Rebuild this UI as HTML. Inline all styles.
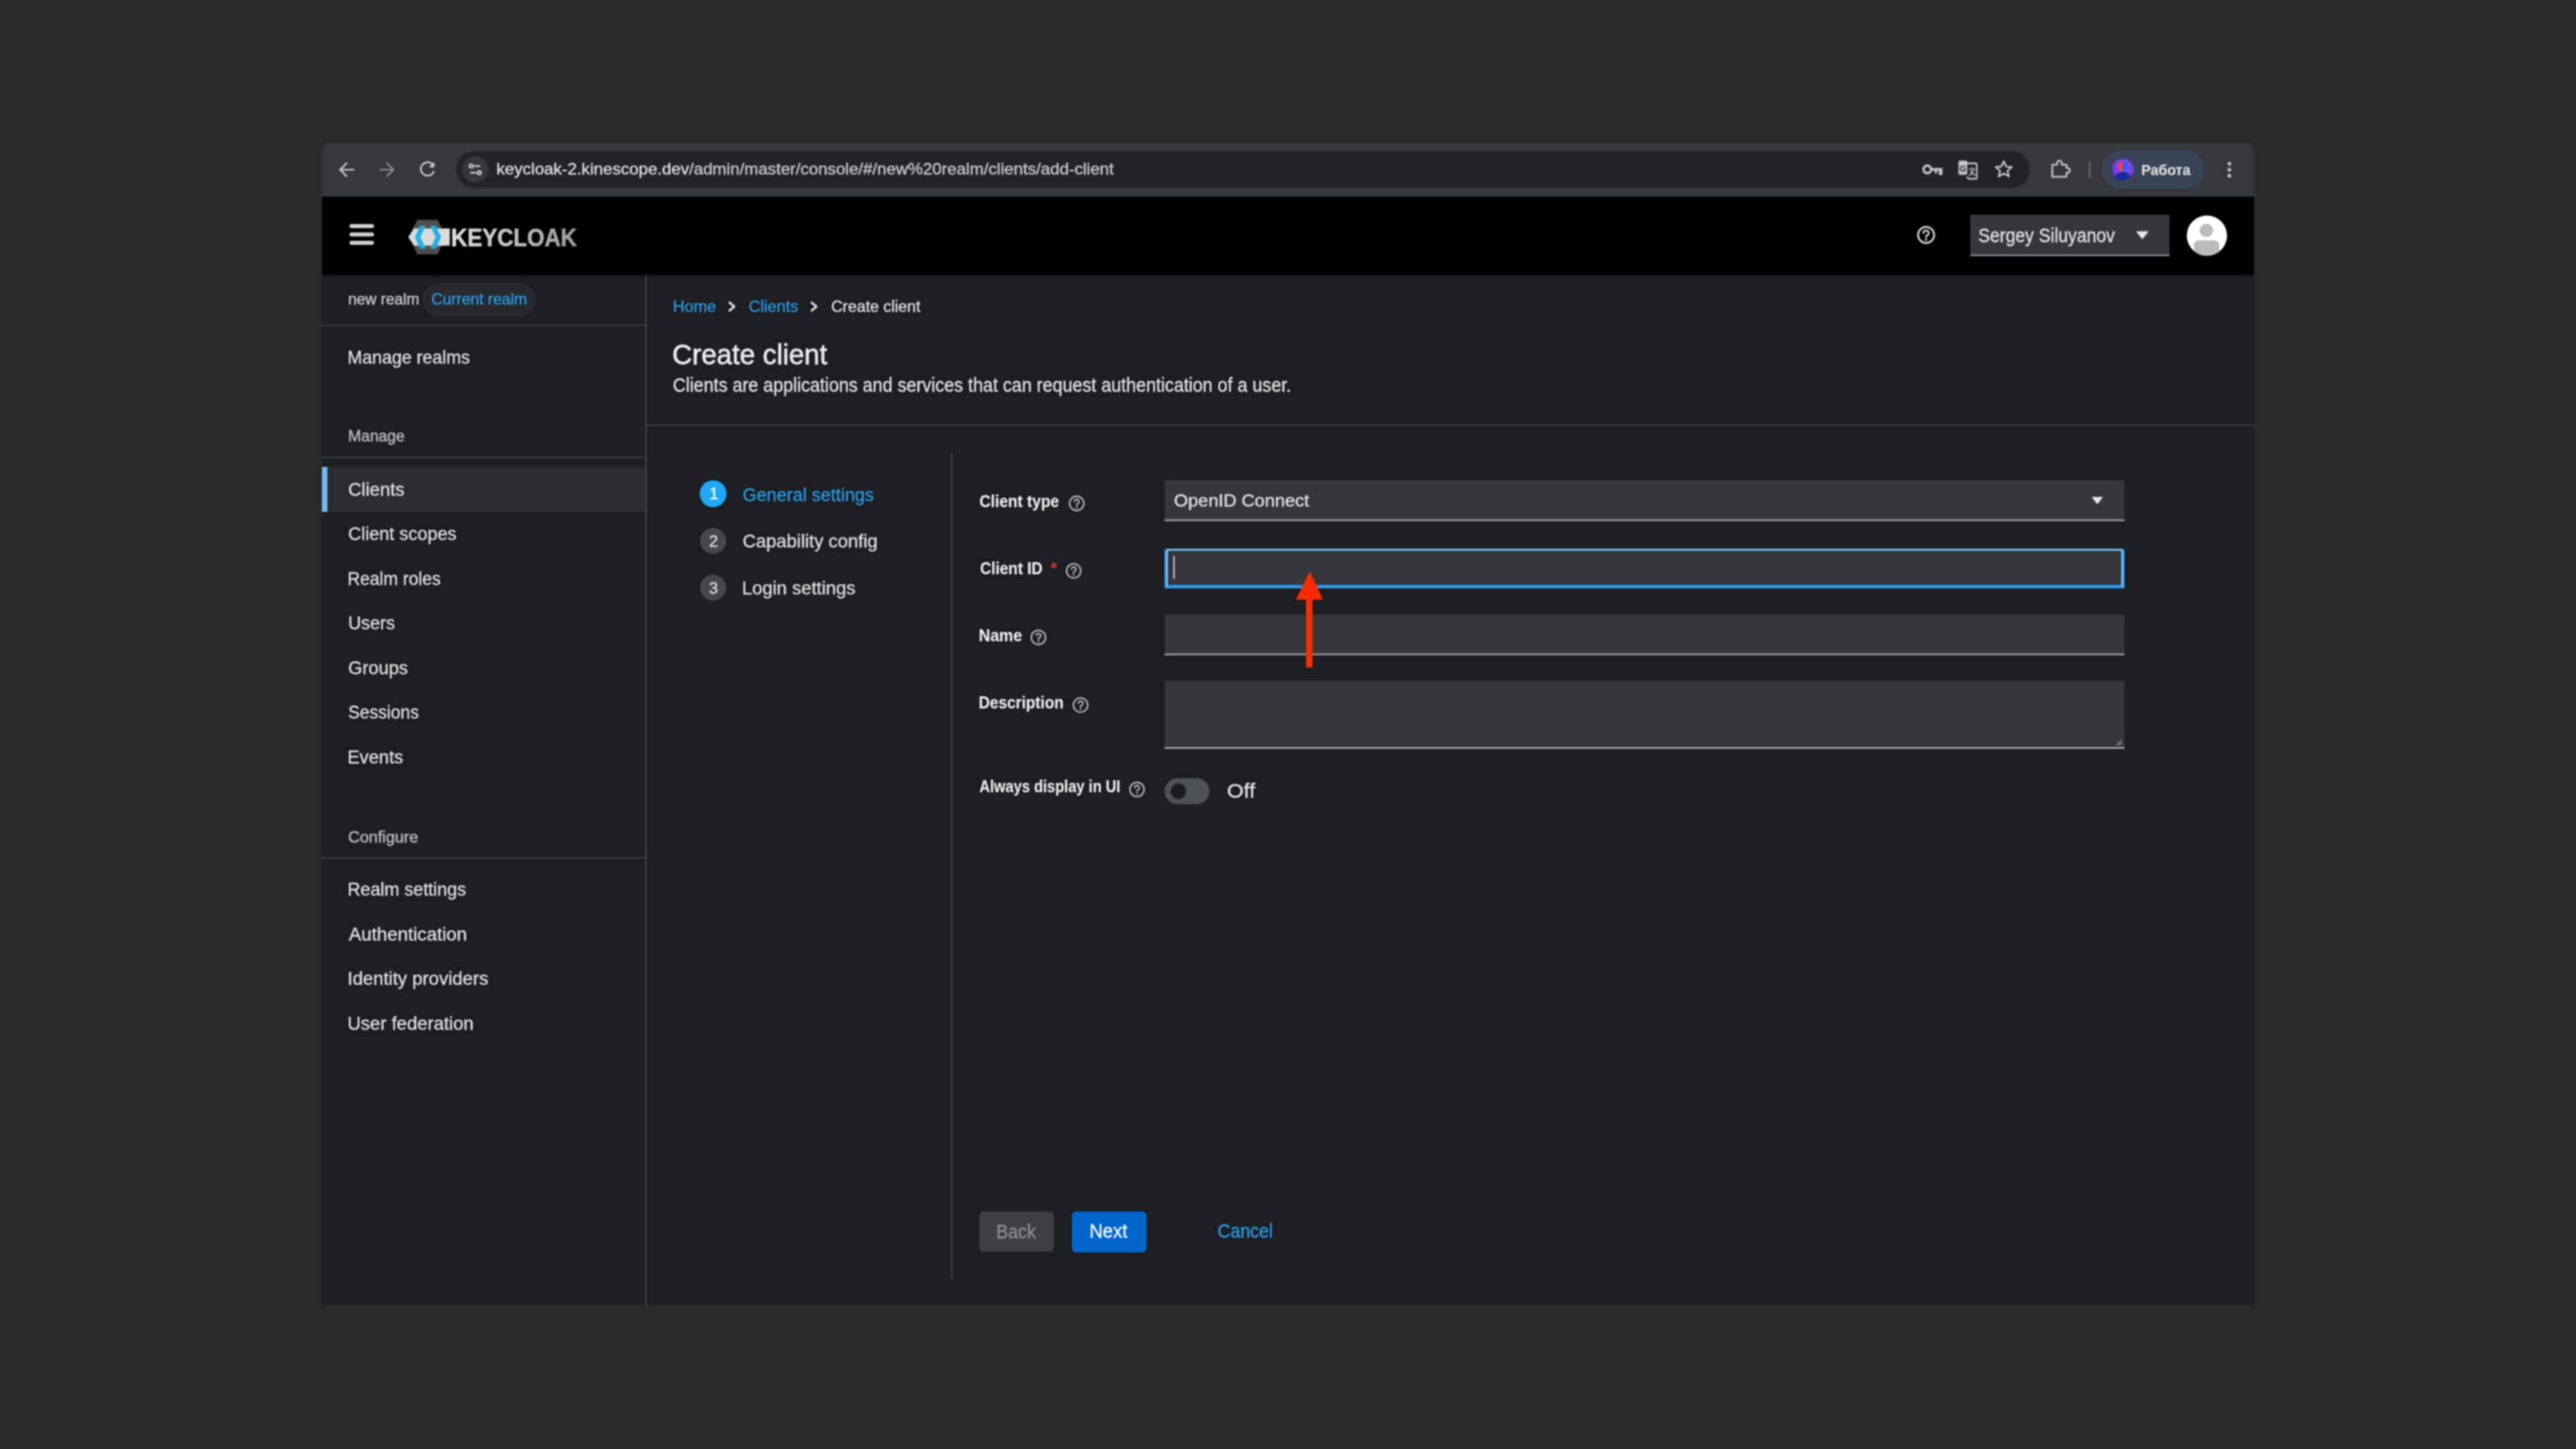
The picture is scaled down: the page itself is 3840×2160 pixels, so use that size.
<!DOCTYPE html>
<html><head><meta charset="utf-8">
<style>
html,body{margin:0;padding:0;width:3840px;height:2160px;overflow:hidden;background:#2a2a2a;}
*{box-sizing:border-box;}
body{font-family:"Liberation Sans",sans-serif;position:relative;}
.a{position:absolute;}
.t{position:absolute;line-height:1;white-space:nowrap;transform-origin:0 0;-webkit-text-stroke:0.35px currentColor;}
svg{position:absolute;overflow:visible;}
</style></head>
<body><div id="wrap" style="position:absolute;left:0;top:0;width:3840px;height:2160px;filter:blur(0.9px);">

<div class="a" style="left:480.00px;top:213.00px;width:2880.00px;height:1732.00px;background:#1d1e22;border-radius:10px 10px 0 0;"></div>
<div class="a" style="left:480.00px;top:213.00px;width:2880.00px;height:80.00px;background:#36383c;border-radius:10px 10px 0 0;"></div>
<div class="a" style="left:680.00px;top:225.00px;width:2346.00px;height:55.00px;background:#222428;border-radius:28px;"></div>
<div class="a" style="left:689.00px;top:233.00px;width:39.00px;height:39.00px;background:#35373b;border-radius:50%;"></div>
<svg style="left:0;top:0" width="3840" height="300" viewBox="0 0 3840 300">
 <g stroke="#c4c6ca" stroke-width="2.6" fill="none" stroke-linecap="round" stroke-linejoin="round">
  <path d="M507 253 H527 M516.5 243.5 L507 253 L516.5 262.5"/>
 </g>
 <g stroke="#85878b" stroke-width="2.6" fill="none" stroke-linecap="round" stroke-linejoin="round">
  <path d="M566.5 253 H586.5 M577 243.5 L586.5 253 L577 262.5"/>
 </g>
 <path d="M645.5 246 A10 10 0 1 0 646.5 256" stroke="#c4c6ca" stroke-width="2.6" fill="none" stroke-linecap="round"/>
 <path d="M647.5 241 V249.5 H639 Z" fill="#c4c6ca"/>
 <g stroke="#d0d2d5" stroke-width="2.4" fill="none" stroke-linecap="round">
  <circle cx="702.5" cy="247.5" r="2.6"/><path d="M708 247.5 H715"/>
  <circle cx="714.5" cy="257.5" r="2.6"/><path d="M702 257.5 H709"/>
 </g>
 <circle cx="2873" cy="252.5" r="5.6" fill="none" stroke="#c4c6ca" stroke-width="3.6"/>
 <path d="M2878.5 250.6 H2895.5 V261 H2890.3 V254.4 H2887.6 V258.5 H2884.2 V254.4 H2878.5 Z" fill="#c4c6ca"/>
 <rect x="2919.5" y="239.5" width="13" height="21" rx="1.5" fill="#c4c6ca"/>
 <text x="2921" y="255.5" font-family="Liberation Sans" font-size="12.5" font-weight="bold" fill="#26282c">G</text>
 <path d="M2932 243.5 H2945.5 A1.2 1.2 0 0 1 2946.7 244.7 V265.3 A1.2 1.2 0 0 1 2945.5 266.5 H2934.5 L2932 263.5" fill="none" stroke="#c4c6ca" stroke-width="2.4" stroke-linejoin="round"/>
 <path d="M2935.5 252 H2943.5 M2939.5 250 V252 M2942.5 252 Q2940 259 2935.5 261.5 M2937.5 255 Q2940 259.5 2944 261" fill="none" stroke="#c4c6ca" stroke-width="1.6" stroke-linecap="round"/>
 <path d="M2987 240.5 L2990.6 248.3 L2999 249 L2992.6 254.6 L2994.6 263 L2987 258.6 L2979.4 263 L2981.4 254.6 L2975 249 L2983.4 248.3 Z" fill="none" stroke="#c4c6ca" stroke-width="2.5" stroke-linejoin="round"/>
 <path d="M3059.3 245.5 H3066.5 V243 A3.5 3.5 0 0 1 3073.5 243 V245.5 H3080.5 V250.5 H3082 A3.5 3.5 0 0 1 3082 257.5 H3080.5 V263.5 H3059.3 Z" fill="none" stroke="#c4c6ca" stroke-width="2.6" stroke-linejoin="round"/>
 <rect x="3113.5" y="240" width="3" height="26" rx="1.5" fill="#5b5e63"/>
 <circle cx="3323.3" cy="244" r="2.7" fill="#c4c6ca"/>
 <circle cx="3323.3" cy="253" r="2.7" fill="#c4c6ca"/>
 <circle cx="3323.3" cy="262" r="2.7" fill="#c4c6ca"/>
</svg>
<div class="a" style="left:3133.00px;top:224.00px;width:153.00px;height:57.00px;background:#3a4457;border-radius:29px;"></div>
<svg style="left:0;top:0" width="3840" height="300" viewBox="0 0 3840 300"><defs><clipPath id="pav"><circle cx="3164.6" cy="252.8" r="16.2"/></clipPath><radialGradient id="pbg" cx="0.55" cy="0.4" r="0.7"><stop offset="0" stop-color="#8a5cff"/><stop offset="1" stop-color="#5a2fd8"/></radialGradient></defs><circle cx="3164.6" cy="252.8" r="16.2" fill="url(#pbg)"/><g clip-path="url(#pav)"><path d="M3150 272 Q3152 259 3160 257 L3164.5 256 L3169 257 Q3177 259 3179 272 Z" fill="#1a2a9a"/><ellipse cx="3162" cy="248" rx="4.8" ry="7.5" fill="#ff3b4a"/><ellipse cx="3167.5" cy="248.5" rx="3.6" ry="7" fill="#2c5cff"/></g></svg>
<div class="t" id="url" style="left:740.40px;top:240.18px;font-size:24.50px;color:#e6e6e6;font-weight:normal;-webkit-text-stroke:0.35px #e6e6e6;transform:scaleX(1.0239);"><span>keycloak-2.kinescope.dev</span><span style="color:#c2c4c8">/admin/master/console/#/new%20realm/clients/add-client</span></div>
<div class="t" id="rabota" style="left:3191.52px;top:241.66px;font-size:22.75px;color:#e4e6ea;font-weight:bold;-webkit-text-stroke:0.1px #e4e6ea;transform:scaleX(0.9305);">Работа</div>
<div class="a" style="left:480.00px;top:293.00px;width:2880.00px;height:115.00px;background:#000;"></div>
<svg style="left:0;top:0" width="3840" height="420" viewBox="0 0 3840 420">
 <g fill="#cfcfcf">
  <rect x="521" y="334" width="36.5" height="6" rx="3"/>
  <rect x="521" y="346.5" width="36.5" height="6" rx="3"/>
  <rect x="521" y="359" width="36.5" height="6" rx="3"/>
 </g>
 <path d="M622 327.4 H652.5 L664 352 L652.5 379.2 H622 L610 352 Z" fill="#4d4d4d"/>
 <path d="M608.6 353.4 L617 340.4 H670.5 V366.3 H617 Z" fill="#d9d9d9"/>
 <path d="M626.5 336.5 L618.5 353.5 L626.5 370.8 H634.5 L626.5 353.5 L634.5 336.5 Z" fill="#1eb1e6"/>
 <path d="M641.5 336.5 L649.5 353.5 L641.5 370.8 H649.5 L657.5 353.5 L649.5 336.5 Z" fill="#1eb1e6"/>
 <circle cx="2871.2" cy="350.2" r="12" fill="none" stroke="#c8c8c8" stroke-width="3"/>
 <path d="M2867.4 347.5 A3.8 3.8 0 1 1 2872.4 351 Q2871.2 351.6 2871.2 353.2 V353.8" fill="none" stroke="#c8c8c8" stroke-width="2.8" stroke-linecap="round"/>
 <circle cx="2871.2" cy="357.2" r="1.7" fill="#c8c8c8"/>
 <defs><clipPath id="av"><circle cx="3289.8" cy="351.2" r="30"/></clipPath></defs>
 <circle cx="3289.8" cy="351.2" r="30" fill="#fff"/>
 <g clip-path="url(#av)" fill="#bcbcbc">
  <circle cx="3289" cy="343.5" r="10"/>
  <path d="M3270.4 382 V365 Q3270.4 358.2 3279 358.2 H3299.5 Q3308.1 358.2 3308.1 365 V382 Z"/>
 </g>
</svg>
<svg style="left:0;top:0" width="3840" height="420" viewBox="0 0 3840 420"><defs><linearGradient id="kcg" x1="672" x2="861" y1="0" y2="0" gradientUnits="userSpaceOnUse"><stop offset="0" stop-color="#e0e0e0"/><stop offset="1" stop-color="#9c9c9c"/></linearGradient></defs><text x="672.5" y="366.8" font-family="Liberation Sans" font-weight="bold" font-size="37.2" textLength="187.5" lengthAdjust="spacingAndGlyphs" fill="url(#kcg)" stroke="url(#kcg)" stroke-width="0.7">KEYCLOAK</text></svg>
<div class="a" style="left:2937.00px;top:320.00px;width:297.00px;height:61.60px;background:#36373b;border-bottom:3.5px solid #777a7e;"></div>
<svg style="left:0;top:0" width="3840" height="420" viewBox="0 0 3840 420"><path d="M3185.5 345.5 H3201.5 L3193.5 355.5 Z" fill="#e8e8e8" stroke="#e8e8e8" stroke-width="1.5" stroke-linejoin="round"/></svg>
<div class="t" id="user" style="left:2949.00px;top:336.21px;font-size:29.40px;color:#e6e6e6;font-weight:normal;-webkit-text-stroke:0.35px #e6e6e6;transform:scaleX(0.8904);">Sergey Siluyanov</div>
<div class="a" style="left:962.00px;top:408.00px;width:2.00px;height:1537.00px;background:#46484c;"></div>
<div class="a" style="left:480.00px;top:408.00px;width:2880.00px;height:5.00px;background:linear-gradient(#000c,#0000);"></div>
<div class="t" id="newrealm" style="left:519.40px;top:434.30px;font-size:24.00px;color:#c2c4c6;font-weight:normal;-webkit-text-stroke:0.6px #c2c4c6;transform:scaleX(0.9583);">new realm</div>
<div class="a" style="left:629.00px;top:422.40px;width:169.00px;height:49.60px;background:#27292d;border-radius:25px;"></div>
<div class="t" id="currealm" style="left:643.34px;top:434.30px;font-size:24.00px;color:#2a9fe8;font-weight:normal;-webkit-text-stroke:0.35px #2a9fe8;transform:scaleX(0.9724);">Current realm</div>
<div class="a" style="left:480.00px;top:484.00px;width:482.00px;height:2.00px;background:#3f4145;"></div>
<div class="t" id="mrealms" style="left:518.00px;top:518.62px;font-size:27.50px;color:#e2e2e2;font-weight:normal;-webkit-text-stroke:0.35px #e2e2e2;transform:scaleX(0.9625);">Manage realms</div>
<div class="t" id="manage" style="left:519.24px;top:638.32px;font-size:24.80px;color:#b8bbbe;font-weight:normal;-webkit-text-stroke:0.6px #b8bbbe;transform:scaleX(0.9399);">Manage</div>
<div class="a" style="left:480.00px;top:681.00px;width:482.00px;height:2.00px;background:#3f4145;"></div>
<div class="a" style="left:480.00px;top:696.00px;width:482.00px;height:67.00px;background:#2a2c30;"></div>
<div class="a" style="left:480.00px;top:696.00px;width:8.00px;height:67.00px;background:#73bcf7;"></div>
<div class="t" id="nav0" style="left:519.00px;top:715.62px;font-size:27.50px;color:#e2e2e2;font-weight:normal;-webkit-text-stroke:0.35px #e2e2e2;transform:scaleX(1.0002);">Clients</div>
<div class="t" id="nav1" style="left:519.00px;top:782.12px;font-size:27.50px;color:#e2e2e2;font-weight:normal;-webkit-text-stroke:0.35px #e2e2e2;transform:scaleX(0.9788);">Client scopes</div>
<div class="t" id="nav2" style="left:518.00px;top:848.62px;font-size:27.50px;color:#e2e2e2;font-weight:normal;-webkit-text-stroke:0.35px #e2e2e2;transform:scaleX(0.9479);">Realm roles</div>
<div class="t" id="nav3" style="left:518.80px;top:915.12px;font-size:27.50px;color:#e2e2e2;font-weight:normal;-webkit-text-stroke:0.35px #e2e2e2;transform:scaleX(0.9712);">Users</div>
<div class="t" id="nav4" style="left:519.00px;top:981.62px;font-size:27.50px;color:#e2e2e2;font-weight:normal;-webkit-text-stroke:0.35px #e2e2e2;transform:scaleX(0.9892);">Groups</div>
<div class="t" id="nav5" style="left:519.00px;top:1048.12px;font-size:27.50px;color:#e2e2e2;font-weight:normal;-webkit-text-stroke:0.35px #e2e2e2;transform:scaleX(0.9455);">Sessions</div>
<div class="t" id="nav6" style="left:518.00px;top:1114.62px;font-size:27.50px;color:#e2e2e2;font-weight:normal;-webkit-text-stroke:0.35px #e2e2e2;transform:scaleX(0.988);">Events</div>
<div class="t" id="configure" style="left:519.00px;top:1236.32px;font-size:24.80px;color:#b8bbbe;font-weight:normal;-webkit-text-stroke:0.6px #b8bbbe;transform:scaleX(0.9704);">Configure</div>
<div class="a" style="left:480.00px;top:1278.00px;width:482.00px;height:2.00px;background:#3f4145;"></div>
<div class="t" id="nav20" style="left:518.00px;top:1312.03px;font-size:27.50px;color:#e2e2e2;font-weight:normal;-webkit-text-stroke:0.35px #e2e2e2;transform:scaleX(0.9722);">Realm settings</div>
<div class="t" id="nav21" style="left:520.00px;top:1378.53px;font-size:27.50px;color:#e2e2e2;font-weight:normal;-webkit-text-stroke:0.35px #e2e2e2;transform:scaleX(1.0116);">Authentication</div>
<div class="t" id="nav22" style="left:518.00px;top:1445.03px;font-size:27.50px;color:#e2e2e2;font-weight:normal;-webkit-text-stroke:0.35px #e2e2e2;transform:scaleX(1.0024);">Identity providers</div>
<div class="t" id="nav23" style="left:518.00px;top:1511.53px;font-size:27.50px;color:#e2e2e2;font-weight:normal;-webkit-text-stroke:0.35px #e2e2e2;">User federation</div>
<div class="t" id="bc0" style="left:1002.92px;top:444.59px;font-size:24.60px;color:#2a9fe8;font-weight:normal;-webkit-text-stroke:0.35px #2a9fe8;transform:scaleX(0.9842);">Home</div>
<div class="t" id="bc1" style="left:1116.00px;top:444.59px;font-size:24.60px;color:#2a9fe8;font-weight:normal;-webkit-text-stroke:0.35px #2a9fe8;transform:scaleX(0.9865);">Clients</div>
<div class="t" id="bc2" style="left:1238.60px;top:444.59px;font-size:24.60px;color:#e6e6e6;font-weight:normal;-webkit-text-stroke:0.35px #e6e6e6;transform:scaleX(0.9638);">Create client</div>
<svg style="left:0;top:0" width="3840" height="500" viewBox="0 0 3840 500">
 <path d="M1087.5 451 L1094.5 457 L1087.5 463" fill="none" stroke="#e0e0e0" stroke-width="3.2" stroke-linecap="round" stroke-linejoin="round"/>
 <path d="M1210 451 L1217 457 L1210 463" fill="none" stroke="#e0e0e0" stroke-width="3.2" stroke-linecap="round" stroke-linejoin="round"/>
</svg>
<div class="t" id="title" style="left:1001.60px;top:507.88px;font-size:42.50px;color:#ececec;font-weight:normal;-webkit-text-stroke:0.8px #ececec;transform:scaleX(0.969);">Create client</div>
<div class="t" id="sub" style="left:1002.60px;top:559.22px;font-size:29.50px;color:#e6e6e6;font-weight:normal;-webkit-text-stroke:0.35px #e6e6e6;transform:scaleX(0.9037);">Clients are applications and services that can request authentication of a user.</div>
<div class="a" style="left:964.00px;top:633.00px;width:2396.00px;height:2.00px;background:#3f4145;"></div>
<div class="a" style="left:1418.00px;top:675.00px;width:2.00px;height:1231.00px;background:#46484c;"></div>
<svg style="left:0;top:0" width="3840" height="1000" viewBox="0 0 3840 1000">
 <circle cx="1063" cy="736" r="20" fill="#1fa7f8"/>
 <circle cx="1063" cy="806.3" r="19.5" fill="#46484c"/>
 <circle cx="1063" cy="876.1" r="19.5" fill="#46484c"/>
</svg>
<div class="t" id="d1" style="left:1057.50px;top:724.10px;font-size:24.00px;color:#ffffff;font-weight:normal;-webkit-text-stroke:0.35px #ffffff;">1</div>
<div class="t" id="d2" style="left:1057.00px;top:794.90px;font-size:24.00px;color:#e0e0e0;font-weight:normal;-webkit-text-stroke:0.35px #e0e0e0;">2</div>
<div class="t" id="d3" style="left:1057.00px;top:864.60px;font-size:24.00px;color:#e0e0e0;font-weight:normal;-webkit-text-stroke:0.35px #e0e0e0;">3</div>
<div class="t" id="step0" style="left:1106.60px;top:723.62px;font-size:27.50px;color:#2a9fe8;font-weight:normal;-webkit-text-stroke:0.35px #2a9fe8;transform:scaleX(0.9774);">General settings</div>
<div class="t" id="step1" style="left:1106.60px;top:793.12px;font-size:27.50px;color:#e2e2e2;font-weight:normal;-webkit-text-stroke:0.35px #e2e2e2;transform:scaleX(0.9975);">Capability config</div>
<div class="t" id="step2" style="left:1105.60px;top:863.23px;font-size:27.50px;color:#e2e2e2;font-weight:normal;-webkit-text-stroke:0.35px #e2e2e2;transform:scaleX(0.997);">Login settings</div>
<div class="t" id="lbl0" style="left:1460.04px;top:735.15px;font-size:25.00px;color:#f2f2f2;font-weight:bold;-webkit-text-stroke:0.1px #f2f2f2;transform:scaleX(0.9294);">Client type</div>
<div class="t" id="lbl1" style="left:1460.50px;top:835.15px;font-size:25.00px;color:#f2f2f2;font-weight:bold;-webkit-text-stroke:0.1px #f2f2f2;transform:scaleX(0.9185);">Client ID</div>
<div class="t" id="lbl2" style="left:1459.38px;top:935.05px;font-size:25.00px;color:#f2f2f2;font-weight:bold;-webkit-text-stroke:0.1px #f2f2f2;transform:scaleX(0.9489);">Name</div>
<div class="t" id="lbl3" style="left:1459.16px;top:1034.65px;font-size:25.00px;color:#f2f2f2;font-weight:bold;-webkit-text-stroke:0.1px #f2f2f2;transform:scaleX(0.92);">Description</div>
<div class="t" id="lbl4" style="left:1460.16px;top:1160.35px;font-size:25.00px;color:#f2f2f2;font-weight:bold;-webkit-text-stroke:0.1px #f2f2f2;transform:scaleX(0.8745);">Always display in UI</div>
<svg style="left:0;top:0" width="3840" height="1300" viewBox="0 0 3840 1300"><circle cx="1605" cy="750.4" r="10.6" fill="none" stroke="#b0b3b6" stroke-width="2.4"/><path d="M1601.8 747.8 A3.3 3.3 0 1 1 1606 751.0 Q1605 751.6 1605 753.0 V753.4" fill="none" stroke="#b0b3b6" stroke-width="2.3" stroke-linecap="round"/><circle cx="1605" cy="756.4" r="1.4" fill="#b0b3b6"/><circle cx="1600.5" cy="851" r="10.6" fill="none" stroke="#b0b3b6" stroke-width="2.4"/><path d="M1597.3 848.4 A3.3 3.3 0 1 1 1601.5 851.6 Q1600.5 852.2 1600.5 853.6 V854" fill="none" stroke="#b0b3b6" stroke-width="2.3" stroke-linecap="round"/><circle cx="1600.5" cy="857" r="1.4" fill="#b0b3b6"/><circle cx="1548" cy="950.2" r="10.6" fill="none" stroke="#b0b3b6" stroke-width="2.4"/><path d="M1544.8 947.6 A3.3 3.3 0 1 1 1549 950.8000000000001 Q1548 951.4000000000001 1548 952.8000000000001 V953.2" fill="none" stroke="#b0b3b6" stroke-width="2.3" stroke-linecap="round"/><circle cx="1548" cy="956.2" r="1.4" fill="#b0b3b6"/><circle cx="1610.8" cy="1051" r="10.6" fill="none" stroke="#b0b3b6" stroke-width="2.4"/><path d="M1607.6 1048.4 A3.3 3.3 0 1 1 1611.8 1051.6 Q1610.8 1052.2 1610.8 1053.6 V1054" fill="none" stroke="#b0b3b6" stroke-width="2.3" stroke-linecap="round"/><circle cx="1610.8" cy="1057" r="1.4" fill="#b0b3b6"/><circle cx="1694.9" cy="1176.8" r="10.6" fill="none" stroke="#b0b3b6" stroke-width="2.4"/><path d="M1691.7 1174.2 A3.3 3.3 0 1 1 1695.9 1177.3999999999999 Q1694.9 1178.0 1694.9 1179.3999999999999 V1179.8" fill="none" stroke="#b0b3b6" stroke-width="2.3" stroke-linecap="round"/><circle cx="1694.9" cy="1182.8" r="1.4" fill="#b0b3b6"/><path d="M1571 839 L1571 847 M1567.5 841 L1574.5 845 M1574.5 841 L1567.5 845" stroke="#e0403a" stroke-width="2" stroke-linecap="round"/></svg>
<div class="a" style="left:1736.00px;top:716.00px;width:1431.00px;height:60.60px;background:#36373b;border-bottom:3px solid #8a8d90;"></div>
<div class="t" id="oid" style="left:1749.52px;top:732.76px;font-size:26.40px;color:#e6e6e6;font-weight:normal;-webkit-text-stroke:0.35px #e6e6e6;transform:scaleX(1.0255);">OpenID Connect</div>
<svg style="left:0;top:0" width="3840" height="800" viewBox="0 0 3840 800"><path d="M3119.5 741.5 H3133.5 L3126.5 750.5 Z" fill="#e8e8e8" stroke="#e8e8e8" stroke-width="1.5" stroke-linejoin="round"/></svg>
<div class="a" style="left:1736.00px;top:818.00px;width:1431.00px;height:59.00px;background:#2b9af3;border-radius:4px 4px 0 0;"></div>
<div class="a" style="left:1739.00px;top:821.00px;width:1425.00px;height:50.50px;background:#36373b;border-radius:2px;"></div>
<div class="a" style="left:1738px;top:818px;width:1427px;height:56px;border:3px solid #73bcf7;border-bottom:none;border-radius:5px 5px 0 0;"></div>
<div class="a" style="left:1748.50px;top:829.00px;width:2.50px;height:34.00px;background:#d8d8d8;"></div>
<div class="a" style="left:1736.00px;top:916.00px;width:1431.00px;height:61.40px;background:#36373b;border-bottom:3.5px solid #8a8d90;"></div>
<div class="a" style="left:1736.00px;top:1015.30px;width:1431.00px;height:101.00px;background:#36373b;border-bottom:2.5px solid #c0c2c4;"></div>
<svg style="left:0;top:0" width="3840" height="1200" viewBox="0 0 3840 1200"><path d="M3155 1111 L3163 1103 M3159 1111 L3163 1107" stroke="#9a9c9f" stroke-width="1.5"/></svg>
<div class="a" style="left:1736.00px;top:1159.50px;width:66.60px;height:39.50px;background:#4f5255;border-radius:20px;"></div>
<div class="a" style="left:1744.5px;top:1168px;width:23px;height:23px;border-radius:50%;background:#1b1d21;"></div>
<div class="t" id="off" style="left:1829.00px;top:1165.35px;font-size:29.00px;color:#e6e6e6;font-weight:normal;-webkit-text-stroke:0.35px #e6e6e6;transform:scaleX(1.1053);">Off</div>
<div class="a" style="left:1460.20px;top:1806.00px;width:110.60px;height:60.00px;background:#3e4044;border-radius:6px;"></div>
<div class="t" id="back" style="left:1485.40px;top:1821.65px;font-size:29.00px;color:#8e9194;font-weight:normal;-webkit-text-stroke:0.35px #8e9194;transform:scaleX(0.9194);">Back</div>
<div class="a" style="left:1598.00px;top:1806.00px;width:110.50px;height:60.50px;background:#0066cc;border-radius:6px;"></div>
<div class="t" id="next" style="left:1624.00px;top:1821.15px;font-size:29.00px;color:#ffffff;font-weight:normal;-webkit-text-stroke:0.35px #ffffff;transform:scaleX(0.9484);">Next</div>
<div class="t" id="cancel" style="left:1815.00px;top:1821.15px;font-size:29.00px;color:#2a9fe8;font-weight:normal;-webkit-text-stroke:0.35px #2a9fe8;transform:scaleX(0.9139);">Cancel</div>
<svg style="left:0;top:0" width="3840" height="1100" viewBox="0 0 3840 1100"><path d="M1952.5 852.3 L1972.2 894 H1956.5 V995 H1947 V894 H1931.7 Z" fill="#ff2b00"/></svg>
</div></body></html>
